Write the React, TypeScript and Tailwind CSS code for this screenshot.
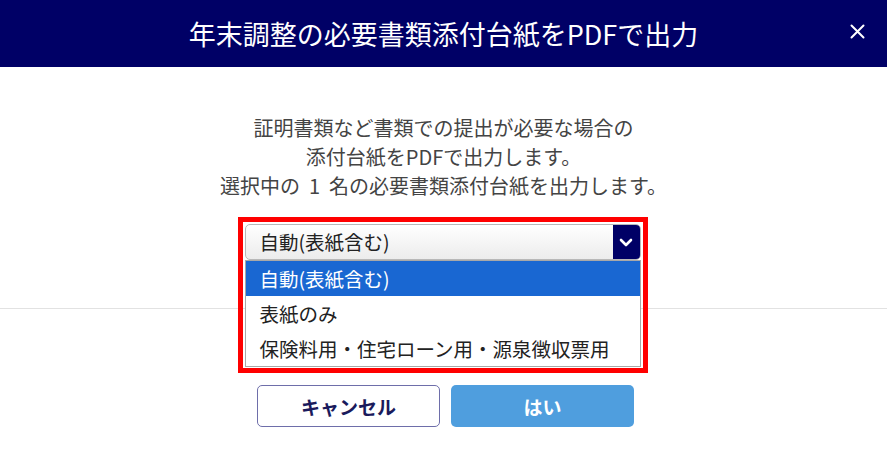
import React from "react";

export default function App() {
  const font = { fontFamily: '"Noto Sans CJK JP", "Noto Sans", sans-serif' };
  return (
    <div className="w-[887px] h-[459px] bg-white flex flex-col overflow-hidden" style={font}>
      <div className="h-[67px] bg-[#000066] flex items-center justify-center relative shrink-0">
        <div className="text-white text-[27px] leading-none tracking-[0px]">年末調整の必要書類添付台紙をPDFで出力</div>
        <button className="absolute right-[22px] top-[23px] w-[16px] h-[16px] flex items-center justify-center">
          <svg width="15" height="15" viewBox="0 0 15 15">
            <path d="M1.5 1.5 L13.5 13.5 M13.5 1.5 L1.5 13.5" stroke="white" strokeWidth="2" strokeLinecap="round" />
          </svg>
        </button>
      </div>
      <div className="h-[242px] shrink-0 border-b border-[#e2e2e2] flex flex-col items-center pt-[46px]">
        <div className="text-[20px] leading-[29px] text-[#444] text-center">
          <div>証明書類など書類での提出が必要な場合の</div>
          <div>添付台紙をPDFで出力します。</div>
          <div>
            選択中の<span className="inline-block px-[9px]">1</span>名の必要書類添付台紙を出力します。
          </div>
        </div>
        <div className="relative mt-[24px] w-[396px] h-[36px] ml-[-2px]">
          <div className="w-full h-full rounded-[5px] border border-[#b8b8b8] bg-gradient-to-b from-white to-[#ececec] flex items-center overflow-hidden">
            <div className="flex-1 pl-[14px] text-[19.5px] text-[#222] leading-none">自動(表紙含む)</div>
            <div className="w-[27px] h-full bg-[#000066] flex items-center justify-center">
              <svg width="14" height="9" viewBox="0 0 14 9">
                <path d="M2 2 L7 7 L12 2" fill="none" stroke="white" strokeWidth="2.6" strokeLinecap="round" strokeLinejoin="round" />
              </svg>
            </div>
          </div>
          <div className="absolute left-0 top-[36px] w-full border border-[#a8a8a8] bg-white z-10">
            <div className="h-[35px] bg-[#1967d2] text-white text-[19.5px] flex items-center pl-[14px]">自動(表紙含む)</div>
            <div className="h-[35px] text-[#222] text-[19.5px] flex items-center pl-[14px]">表紙のみ</div>
            <div className="h-[35px] text-[#222] text-[19.5px] flex items-center pl-[14px]">保険料用・住宅ローン用・源泉徴収票用</div>
          </div>
          <div className="absolute left-[-7px] top-[-7px] w-[410px] h-[156px] border-[5px] border-[#ff0000] z-20 pointer-events-none" />
        </div>
      </div>
      <div className="flex justify-center gap-[11px] pt-[76px] pl-[4px]">
        <button className="w-[183px] h-[42px] rounded-[5px] border-[1.5px] border-[#6e6eaa] bg-white text-[#1a1a5c] font-bold text-[19px] leading-none">キャンセル</button>
        <button className="w-[183px] h-[42px] rounded-[5px] bg-[#4f9ede] text-white font-bold text-[19px] leading-none">はい</button>
      </div>
    </div>
  );
}
